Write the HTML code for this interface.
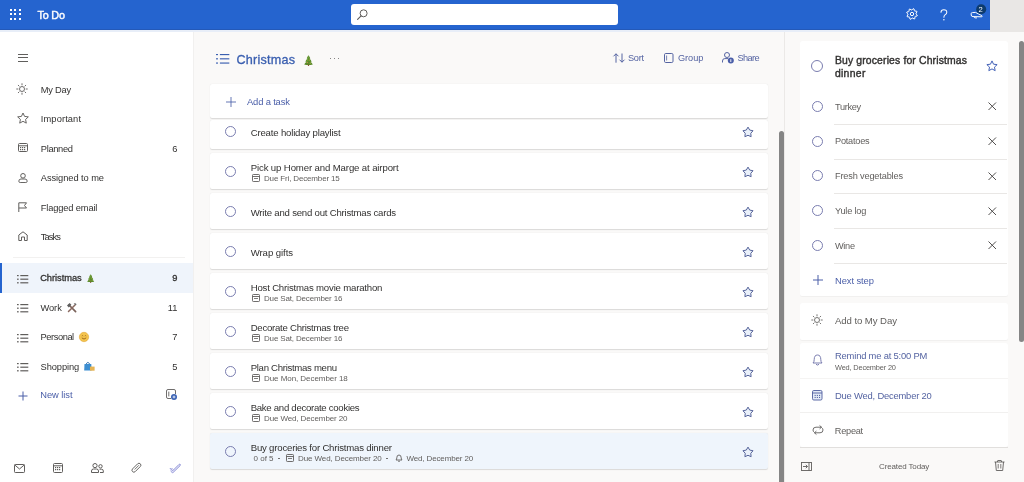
<!DOCTYPE html>
<html><head><meta charset="utf-8"><title>To Do</title>
<style>
html,body{margin:0;padding:0;width:1024px;height:482px;overflow:hidden;background:#faf9f8;font-family:"Liberation Sans", sans-serif;}
.t{position:absolute;white-space:nowrap;line-height:1;}
svg{display:block}
#app{position:absolute;left:0;top:0;width:1024px;height:482px;overflow:hidden;filter:blur(0.35px);}
</style></head><body><div id="app">
<div style="position:absolute;left:0px;top:30px;width:193px;height:452px;background:#ffffff"></div>
<div style="position:absolute;left:193px;top:30px;width:591px;height:452px;background:#faf9f8"></div>
<div style="position:absolute;left:784px;top:30px;width:240px;height:452px;background:#faf9f8"></div>
<div style="position:absolute;left:784px;top:30px;width:1px;height:452px;background:#ebe9e7"></div>
<div style="position:absolute;left:193px;top:30px;width:1px;height:452px;background:#f1f0ef"></div>
<div style="position:absolute;left:0px;top:0px;width:1024px;height:30px;background:#2564cf"></div>
<div style="position:absolute;left:0px;top:28.5px;width:1024px;height:1.5px;background:#2459b8"></div>
<div style="position:absolute;left:0px;top:30px;width:1024px;height:1.5px;background:#e8eef8"></div>
<div style="position:absolute;left:10px;top:9px;width:2px;height:2px;background:#fff"></div>
<div style="position:absolute;left:14px;top:9px;width:2px;height:2px;background:#fff"></div>
<div style="position:absolute;left:19px;top:9px;width:2px;height:2px;background:#fff"></div>
<div style="position:absolute;left:10px;top:13px;width:2px;height:2px;background:#fff"></div>
<div style="position:absolute;left:14px;top:13px;width:2px;height:2px;background:#fff"></div>
<div style="position:absolute;left:19px;top:13px;width:2px;height:2px;background:#fff"></div>
<div style="position:absolute;left:10px;top:17.5px;width:2px;height:2px;background:#fff"></div>
<div style="position:absolute;left:14px;top:17.5px;width:2px;height:2px;background:#fff"></div>
<div style="position:absolute;left:19px;top:17.5px;width:2px;height:2px;background:#fff"></div>
<div class="t" style="left:37.50px;top:10.26px;font-size:10.8px;color:#ffffff;font-weight:400;letter-spacing:-0.178px;-webkit-text-stroke:0.4px #fff;">To Do</div>
<div style="position:absolute;left:351px;top:4px;width:267px;height:21px;background:#fff;border-radius:3px"></div>
<svg style="position:absolute;left:356px;top:8px;overflow:visible" width="13" height="13" viewBox="0 0 13 13"><circle cx="7.6" cy="5.3" r="3.5" fill="none" stroke="#605e5c" stroke-width="1"/><path d="M5.1 7.8 L1.6 11.3" stroke="#605e5c" stroke-width="1.1" stroke-linecap="round"/></svg>
<svg style="position:absolute;left:906px;top:8.3px;overflow:visible" width="12" height="12" viewBox="0 0 12 12"><path d="M11.29,7.07 L10.98,8.08 L9.40,8.29 L8.89,8.91 L8.98,10.50 L8.05,11.00 L6.79,10.02 L5.99,10.10 L4.93,11.29 L3.92,10.98 L3.71,9.40 L3.09,8.89 L1.50,8.98 L1.00,8.05 L1.98,6.79 L1.90,5.99 L0.71,4.93 L1.02,3.92 L2.60,3.71 L3.11,3.09 L3.02,1.50 L3.95,1.00 L5.21,1.98 L6.01,1.90 L7.07,0.71 L8.08,1.02 L8.29,2.60 L8.91,3.11 L10.50,3.02 L11.00,3.95 L10.02,5.21 L10.10,6.01 Z" fill="none" stroke="#fff" stroke-width="1" stroke-linejoin="round"/><circle cx="6" cy="6" r="1.7" fill="none" stroke="#fff" stroke-width="1"/></svg>
<svg style="position:absolute;left:939.5px;top:8.5px;overflow:visible" width="8" height="12" viewBox="0 0 8 12"><path d="M1 3.2 Q1 0.8 3.8 0.8 Q6.8 0.8 6.8 3.3 Q6.8 4.9 5 5.9 Q3.9 6.6 3.9 8.3" fill="none" stroke="#fff" stroke-width="1.05" stroke-linecap="round"/><circle cx="3.9" cy="10.7" r="0.75" fill="#fff"/></svg>
<svg style="position:absolute;left:969.5px;top:11px;overflow:visible" width="14" height="8" viewBox="0 0 14 8"><path d="M1.2 2.6 Q1.2 1.6 2.4 1.6 L5.5 1.4 L11.8 4.6 Q12.6 5.2 11.8 5.8 L3 5.6 Q1.2 5.5 1.2 4 Z" fill="none" stroke="#fff" stroke-width="1" stroke-linejoin="round"/><path d="M4.2 5.7 L4.8 6.9 L7 6.9" fill="none" stroke="#fff" stroke-width="0.9"/></svg>
<svg style="position:absolute;left:975.8px;top:4px;overflow:visible" width="10.4" height="10.4" viewBox="0 0 10.4 10.4"><circle cx="5.2" cy="5.2" r="5" fill="#0d3b6e"/></svg>
<div class="t" style="left:978.60px;top:6.17px;font-size:7.6px;color:#ffffff;font-weight:400;">2</div>
<div style="position:absolute;left:990px;top:0px;width:34px;height:32px;background:#e9e7e5"></div>
<div style="position:absolute;left:17.5px;top:53.5px;width:10.5px;height:1px;background:#605e5c"></div>
<div style="position:absolute;left:17.5px;top:57.0px;width:10.5px;height:1px;background:#605e5c"></div>
<div style="position:absolute;left:17.5px;top:60.5px;width:10.5px;height:1px;background:#605e5c"></div>
<div class="t" style="left:40.80px;top:85.53px;font-size:9.3px;color:#323130;font-weight:400;letter-spacing:-0.224px;">My Day</div>
<div class="t" style="left:40.80px;top:115.03px;font-size:9.3px;color:#323130;font-weight:400;letter-spacing:0.114px;">Important</div>
<div class="t" style="left:40.80px;top:144.53px;font-size:9.3px;color:#323130;font-weight:400;letter-spacing:-0.339px;">Planned</div>
<div class="t" style="left:40.80px;top:174.03px;font-size:9.3px;color:#323130;font-weight:400;letter-spacing:-0.069px;">Assigned to me</div>
<div class="t" style="left:40.80px;top:203.53px;font-size:9.3px;color:#323130;font-weight:400;letter-spacing:-0.151px;">Flagged email</div>
<div class="t" style="left:40.80px;top:233.03px;font-size:9.3px;color:#323130;font-weight:400;letter-spacing:-0.893px;">Tasks</div>
<div class="t" style="right:846.70px;top:144.53px;font-size:9.3px;color:#323130;font-weight:400;">6</div>
<svg style="position:absolute;left:16.3px;top:82.9px;overflow:visible" width="12" height="12" viewBox="0 0 12 12"><circle cx="6" cy="6" r="2.5" fill="none" stroke="#605e5c" stroke-width="0.9"/><line x1="10.10" y1="6.00" x2="11.30" y2="6.00" stroke="#605e5c" stroke-width="0.9" stroke-linecap="round"/><line x1="8.90" y1="8.90" x2="9.75" y2="9.75" stroke="#605e5c" stroke-width="0.9" stroke-linecap="round"/><line x1="6.00" y1="10.10" x2="6.00" y2="11.30" stroke="#605e5c" stroke-width="0.9" stroke-linecap="round"/><line x1="3.10" y1="8.90" x2="2.25" y2="9.75" stroke="#605e5c" stroke-width="0.9" stroke-linecap="round"/><line x1="1.90" y1="6.00" x2="0.70" y2="6.00" stroke="#605e5c" stroke-width="0.9" stroke-linecap="round"/><line x1="3.10" y1="3.10" x2="2.25" y2="2.25" stroke="#605e5c" stroke-width="0.9" stroke-linecap="round"/><line x1="6.00" y1="1.90" x2="6.00" y2="0.70" stroke="#605e5c" stroke-width="0.9" stroke-linecap="round"/><line x1="8.90" y1="3.10" x2="9.75" y2="2.25" stroke="#605e5c" stroke-width="0.9" stroke-linecap="round"/></svg>
<svg style="position:absolute;left:16.5px;top:112px;overflow:visible" width="12" height="12" viewBox="0 0 12 12"><path d="M6.00,1.00 L7.59,4.42 L11.33,4.87 L8.57,7.43 L9.29,11.13 L6.00,9.30 L2.71,11.13 L3.43,7.43 L0.67,4.87 L4.41,4.42 Z" fill="none" stroke="#605e5c" stroke-width="0.95" stroke-linejoin="round"/></svg>
<svg style="position:absolute;left:17.5px;top:143px;overflow:visible" width="10" height="9" viewBox="0 0 10 9"><rect x="0.5" y="0.5" width="9" height="8" rx="1" fill="none" stroke="#605e5c"/><line x1="0.5" y1="2.8" x2="9.5" y2="2.8" stroke="#605e5c"/><rect x="2" y="4" width="1.2" height="1.2" fill="#605e5c"/><rect x="4" y="4" width="1.2" height="1.2" fill="#605e5c"/><rect x="6" y="4" width="1.2" height="1.2" fill="#605e5c"/><rect x="2" y="6" width="1.2" height="1.2" fill="#605e5c"/><rect x="4" y="6" width="1.2" height="1.2" fill="#605e5c"/><rect x="6" y="6" width="1.2" height="1.2" fill="#605e5c"/></svg>
<svg style="position:absolute;left:17.5px;top:172.5px;overflow:visible" width="10" height="10" viewBox="0 0 10 10"><circle cx="5" cy="2.8" r="2.3" fill="none" stroke="#605e5c"/><path d="M5 9.5 H2.2 Q0.8 9.5 0.8 8.2 Q0.8 6 3 6 H7 Q9.2 6 9.2 8.2 Q9.2 9.5 7.8 9.5 Z" fill="none" stroke="#605e5c" stroke-width="0.95"/></svg>
<svg style="position:absolute;left:17.5px;top:202px;overflow:visible" width="10" height="10" viewBox="0 0 10 10"><path d="M0.8 10 L0.8 0.8 L8.5 0.8 L6.5 3.5 L8.5 6 L0.8 6" fill="none" stroke="#605e5c" stroke-linejoin="round"/></svg>
<svg style="position:absolute;left:17.5px;top:231px;overflow:visible" width="10" height="10" viewBox="0 0 10 10"><path d="M0.8 9.5 L0.8 4 L5 0.8 L9.2 4 L9.2 9.5 L6.5 9.5 L6.5 6 L3.5 6 L3.5 9.5 Z" fill="none" stroke="#605e5c" stroke-linejoin="round"/></svg>
<div style="position:absolute;left:13px;top:256.5px;width:172px;height:1px;background:#f2f1f0"></div>
<div style="position:absolute;left:0px;top:263px;width:193px;height:29.5px;background:#eff4fb"></div>
<div style="position:absolute;left:0px;top:263px;width:2px;height:29.5px;background:#2564cf"></div>
<svg style="position:absolute;left:17px;top:274.7px;overflow:visible" width="12.0" height="9.0" viewBox="0 0 12.0 9.0"><rect x="0" y="0.0" width="1.7" height="1.2" fill="#605e5c"/><rect x="3.3" y="0.0" width="8.0" height="1.2" fill="#605e5c"/><rect x="0" y="3.6" width="1.7" height="1.2" fill="#605e5c"/><rect x="3.3" y="3.6" width="8.0" height="1.2" fill="#605e5c"/><rect x="0" y="7.2" width="1.7" height="1.2" fill="#605e5c"/><rect x="3.3" y="7.2" width="8.0" height="1.2" fill="#605e5c"/></svg>
<div class="t" style="left:40.20px;top:274.13px;font-size:9.3px;color:#323130;font-weight:400;letter-spacing:-0.044px;-webkit-text-stroke:0.3px #323130;">Christmas</div>
<div class="t" style="right:846.70px;top:274.13px;font-size:9.3px;color:#323130;font-weight:400;-webkit-text-stroke:0.3px #323130;">9</div>
<svg style="position:absolute;left:17px;top:304.2px;overflow:visible" width="12.0" height="9.0" viewBox="0 0 12.0 9.0"><rect x="0" y="0.0" width="1.7" height="1.2" fill="#605e5c"/><rect x="3.3" y="0.0" width="8.0" height="1.2" fill="#605e5c"/><rect x="0" y="3.6" width="1.7" height="1.2" fill="#605e5c"/><rect x="3.3" y="3.6" width="8.0" height="1.2" fill="#605e5c"/><rect x="0" y="7.2" width="1.7" height="1.2" fill="#605e5c"/><rect x="3.3" y="7.2" width="8.0" height="1.2" fill="#605e5c"/></svg>
<div class="t" style="left:40.50px;top:303.63px;font-size:9.3px;color:#323130;font-weight:400;letter-spacing:-0.077px;">Work</div>
<div class="t" style="right:846.70px;top:303.63px;font-size:9.3px;color:#323130;font-weight:400;">11</div>
<svg style="position:absolute;left:17px;top:333.7px;overflow:visible" width="12.0" height="9.0" viewBox="0 0 12.0 9.0"><rect x="0" y="0.0" width="1.7" height="1.2" fill="#605e5c"/><rect x="3.3" y="0.0" width="8.0" height="1.2" fill="#605e5c"/><rect x="0" y="3.6" width="1.7" height="1.2" fill="#605e5c"/><rect x="3.3" y="3.6" width="8.0" height="1.2" fill="#605e5c"/><rect x="0" y="7.2" width="1.7" height="1.2" fill="#605e5c"/><rect x="3.3" y="7.2" width="8.0" height="1.2" fill="#605e5c"/></svg>
<div class="t" style="left:40.50px;top:333.13px;font-size:9.3px;color:#323130;font-weight:400;letter-spacing:-0.430px;">Personal</div>
<div class="t" style="right:846.70px;top:333.13px;font-size:9.3px;color:#323130;font-weight:400;">7</div>
<svg style="position:absolute;left:17px;top:363.2px;overflow:visible" width="12.0" height="9.0" viewBox="0 0 12.0 9.0"><rect x="0" y="0.0" width="1.7" height="1.2" fill="#605e5c"/><rect x="3.3" y="0.0" width="8.0" height="1.2" fill="#605e5c"/><rect x="0" y="3.6" width="1.7" height="1.2" fill="#605e5c"/><rect x="3.3" y="3.6" width="8.0" height="1.2" fill="#605e5c"/><rect x="0" y="7.2" width="1.7" height="1.2" fill="#605e5c"/><rect x="3.3" y="7.2" width="8.0" height="1.2" fill="#605e5c"/></svg>
<div class="t" style="left:40.50px;top:362.63px;font-size:9.3px;color:#323130;font-weight:400;letter-spacing:-0.072px;">Shopping</div>
<div class="t" style="right:846.70px;top:362.63px;font-size:9.3px;color:#323130;font-weight:400;">5</div>
<svg style="position:absolute;left:87.2px;top:273.8px;overflow:visible" width="9" height="11" viewBox="0 0 9 11"><g transform="scale(0.82)"><path d="M4.5 0.2 Q5.6 1.8 6.3 3.2 Q6 3.5 5.6 3.5 Q6.9 5 7.6 6.4 Q7.2 6.7 6.7 6.7 Q8.2 8.2 8.8 9.4 Q4.5 10.4 0.2 9.4 Q0.8 8.2 2.3 6.7 Q1.8 6.7 1.4 6.4 Q2.1 5 3.4 3.5 Q3 3.5 2.7 3.2 Q3.4 1.8 4.5 0.2 Z" fill="#5a8a2a"/><path d="M4.5 1.5 Q3.5 4 2.5 8" stroke="#7fae45" stroke-width="0.8" fill="none"/><circle cx="5.2" cy="5" r="0.55" fill="#d9c94a"/><circle cx="3.6" cy="7.6" r="0.55" fill="#d98a4a"/><circle cx="6.2" cy="8.1" r="0.5" fill="#e0d060"/><rect x="3.9" y="9.6" width="1.2" height="1.3" fill="#7a4a20"/></g></svg>
<svg style="position:absolute;left:66.5px;top:302.5px;overflow:visible" width="10" height="10" viewBox="0 0 10 10"><path d="M2 2 L8.6 8.6" stroke="#7a625a" stroke-width="1.7" stroke-linecap="round"/><path d="M8 2 L1.5 8.5" stroke="#8a6a60" stroke-width="1.5" stroke-linecap="round"/><path d="M0 2.6 L2.6 0 L4.4 1.8 L1.8 4.4 Z" fill="#5e5e5e"/><path d="M6.6 0.6 Q8.8 -0.4 9.6 1.6 L8.4 2.2 L7.8 1.6 Z" fill="#6a6a6a"/></svg>
<svg style="position:absolute;left:79.2px;top:332.3px;overflow:visible" width="10" height="10" viewBox="0 0 10 10"><circle cx="5" cy="5" r="4.7" fill="#f4c44e"/><circle cx="5" cy="5" r="4.7" fill="none" stroke="#e0a73a" stroke-width="0.6"/><path d="M2.8 5.9 Q5 8.2 7.2 5.9" fill="none" stroke="#9a6418" stroke-width="0.9"/><path d="M2.8 4 Q3.5 3.2 4.2 4 M5.8 4 Q6.5 3.2 7.2 4" fill="none" stroke="#9a6418" stroke-width="0.8"/></svg>
<svg style="position:absolute;left:84px;top:361.3px;overflow:visible" width="11" height="10" viewBox="0 0 11 10"><path d="M0.5 3 L7.3 3 L7.6 9.6 L0.2 9.6 Z" fill="#3c8ed1"/><path d="M2.2 3 Q3.9 -0.2 5.6 3" fill="none" stroke="#2a6aa8" stroke-width="0.9"/><rect x="6" y="5.6" width="4.6" height="4.1" fill="#e6b454"/></svg>
<svg style="position:absolute;left:17.5px;top:390.5px;overflow:visible" width="10" height="10" viewBox="0 0 10 10"><path d="M5 0.5 V9.5 M0.5 5 H9.5" stroke="#4a5ea8" stroke-width="1"/></svg>
<div class="t" style="left:40.20px;top:390.93px;font-size:9.3px;color:#4a5ea8;font-weight:400;letter-spacing:-0.022px;">New list</div>
<svg style="position:absolute;left:166px;top:389px;overflow:visible" width="11" height="11" viewBox="0 0 11 11"><path d="M5 9.5 H2 Q0.5 9.5 0.5 8 V2 Q0.5 0.5 2 0.5 H8 Q9.5 0.5 9.5 2 V5" fill="none" stroke="#605e5c" stroke-width="0.9"/><line x1="2.8" y1="2.6" x2="2.8" y2="7.4" stroke="#605e5c" stroke-width="0.9"/><circle cx="8" cy="8" r="3" fill="#3b63b5"/><path d="M8 6.6 V9.4 M6.6 8 H9.4" stroke="#fff" stroke-width="0.8"/></svg>
<svg style="position:absolute;left:14px;top:463.5px;overflow:visible" width="11" height="9" viewBox="0 0 11 9"><rect x="0.5" y="0.5" width="10" height="8" rx="0.8" fill="none" stroke="#605e5c"/><path d="M0.8 1 L5.5 5 L10.2 1" fill="none" stroke="#605e5c"/></svg>
<svg style="position:absolute;left:53px;top:463px;overflow:visible" width="10" height="10" viewBox="0 0 10 10"><rect x="0.5" y="0.5" width="9" height="9" rx="1" fill="none" stroke="#605e5c"/><line x1="0.5" y1="2.8" x2="9.5" y2="2.8" stroke="#605e5c"/><rect x="2" y="4" width="1.2" height="1.2" fill="#605e5c"/><rect x="4" y="4" width="1.2" height="1.2" fill="#605e5c"/><rect x="6" y="4" width="1.2" height="1.2" fill="#605e5c"/><rect x="2" y="6" width="1.2" height="1.2" fill="#605e5c"/><rect x="4" y="6" width="1.2" height="1.2" fill="#605e5c"/><rect x="6" y="6" width="1.2" height="1.2" fill="#605e5c"/></svg>
<svg style="position:absolute;left:90.5px;top:463px;overflow:visible" width="13" height="10" viewBox="0 0 13 10"><circle cx="4" cy="2.6" r="2.1" fill="none" stroke="#605e5c"/><path d="M0.5 9.5 V8 Q0.5 6 2.5 6 H5.5 Q7.5 6 7.5 8 V9.5 Z" fill="none" stroke="#605e5c"/><circle cx="9.5" cy="3.3" r="1.7" fill="none" stroke="#605e5c"/><path d="M8.5 6.2 H10.5 Q12.3 6.2 12.3 8 V9.5 H9" fill="none" stroke="#605e5c"/></svg>
<svg style="position:absolute;left:130px;top:462px;overflow:visible" width="12" height="12" viewBox="0 0 12 12"><g transform="rotate(-45 6 6)"><rect x="1" y="4.2" width="11" height="3.8" rx="1.9" fill="none" stroke="#605e5c" stroke-width="0.9"/><path d="M4 6.1 H10" stroke="#605e5c" stroke-width="0.8"/></g></svg>
<svg style="position:absolute;left:168.5px;top:463px;overflow:visible" width="12" height="10" viewBox="0 0 12 10"><path d="M0.8 5 L3.6 7.8 L10 1.4 Q11 0.6 11.4 1.6 Q11.6 2.2 11 2.8 L4.2 9.4 Q3.6 10 3 9.4 L1.6 8" fill="#e3e4f7" stroke="#8a8fd6" stroke-width="0.9" stroke-linejoin="round"/><path d="M2.5 5 L4 6.5" stroke="#7b80cf" stroke-width="0.8"/></svg>
<svg style="position:absolute;left:216px;top:54.4px;overflow:visible" width="14.16" height="10.62" viewBox="0 0 14.16 10.62"><rect x="0" y="0.0" width="2.006" height="1.15" fill="#3a5fb0"/><rect x="3.8939999999999997" y="0.0" width="9.44" height="1.15" fill="#3a5fb0"/><rect x="0" y="4.248" width="2.006" height="1.15" fill="#3a5fb0"/><rect x="3.8939999999999997" y="4.248" width="9.44" height="1.15" fill="#3a5fb0"/><rect x="0" y="8.496" width="2.006" height="1.15" fill="#3a5fb0"/><rect x="3.8939999999999997" y="8.496" width="9.44" height="1.15" fill="#3a5fb0"/></svg>
<div class="t" style="left:236.50px;top:53.93px;font-size:12.6px;color:#3a5fb0;font-weight:400;letter-spacing:0.224px;-webkit-text-stroke:0.32px #3a5fb0;">Christmas</div>
<svg style="position:absolute;left:304px;top:54.6px;overflow:visible" width="9" height="11" viewBox="0 0 9 11"><g transform="scale(1.0)"><path d="M4.5 0.2 Q5.6 1.8 6.3 3.2 Q6 3.5 5.6 3.5 Q6.9 5 7.6 6.4 Q7.2 6.7 6.7 6.7 Q8.2 8.2 8.8 9.4 Q4.5 10.4 0.2 9.4 Q0.8 8.2 2.3 6.7 Q1.8 6.7 1.4 6.4 Q2.1 5 3.4 3.5 Q3 3.5 2.7 3.2 Q3.4 1.8 4.5 0.2 Z" fill="#5a8a2a"/><path d="M4.5 1.5 Q3.5 4 2.5 8" stroke="#7fae45" stroke-width="0.8" fill="none"/><circle cx="5.2" cy="5" r="0.55" fill="#d9c94a"/><circle cx="3.6" cy="7.6" r="0.55" fill="#d98a4a"/><circle cx="6.2" cy="8.1" r="0.5" fill="#e0d060"/><rect x="3.9" y="9.6" width="1.2" height="1.3" fill="#7a4a20"/></g></svg>
<div style="position:absolute;left:330px;top:57.6px;width:1.3px;height:1.3px;background:#605e5c;border-radius:50%"></div>
<div style="position:absolute;left:334px;top:57.6px;width:1.3px;height:1.3px;background:#605e5c;border-radius:50%"></div>
<div style="position:absolute;left:338px;top:57.6px;width:1.3px;height:1.3px;background:#605e5c;border-radius:50%"></div>
<svg style="position:absolute;left:612.5px;top:53px;overflow:visible" width="12" height="10" viewBox="0 0 12 10"><path d="M3 9.7 V0.8 M0.5 3.3 L3 0.8 L5.5 3.3" fill="none" stroke="#5564a2" stroke-width="1"/><path d="M9 0.5 V9.2 M6.5 6.7 L9 9.2 L11.5 6.7" fill="none" stroke="#5564a2" stroke-width="1"/></svg>
<div class="t" style="left:628.00px;top:53.61px;font-size:9.2px;color:#5564a2;font-weight:400;letter-spacing:-0.291px;">Sort</div>
<svg style="position:absolute;left:664px;top:53px;overflow:visible" width="9.5" height="10" viewBox="0 0 9.5 10"><rect x="0.5" y="0.5" width="8.5" height="9" rx="1.2" fill="none" stroke="#5564a2"/><line x1="2.6" y1="2.5" x2="2.6" y2="7.5" stroke="#5564a2" stroke-width="0.8"/></svg>
<div class="t" style="left:678.00px;top:53.61px;font-size:9.2px;color:#5564a2;font-weight:400;letter-spacing:-0.043px;">Group</div>
<svg style="position:absolute;left:722px;top:51.8px;overflow:visible" width="12" height="12" viewBox="0 0 12 12"><circle cx="5" cy="3" r="2.5" fill="none" stroke="#5564a2"/><path d="M0.5 10.5 V9 Q0.5 6.6 2.8 6.6 H6" fill="none" stroke="#5564a2"/><circle cx="8.8" cy="8.6" r="3" fill="#4a5ea8"/><path d="M8.8 7.2 V10" stroke="#fff" stroke-width="0.9"/></svg>
<div class="t" style="left:737.50px;top:53.61px;font-size:9.2px;color:#5564a2;font-weight:400;letter-spacing:-0.588px;">Share</div>
<div style="position:absolute;left:209.5px;top:83.5px;width:558.5px;height:34.8px;background:#fff;border-radius:2px;box-shadow:0 0.8px 1px rgba(0,0,0,0.13)"></div>
<svg style="position:absolute;left:225.5px;top:96.5px;overflow:visible" width="10" height="10" viewBox="0 0 10 10"><path d="M5 0 V10 M0 5 H10" stroke="#4a5ea8" stroke-width="0.85"/></svg>
<div class="t" style="left:247.00px;top:97.24px;font-size:9.4px;color:#4a5ea8;font-weight:400;letter-spacing:-0.157px;">Add a task</div>
<div style="position:absolute;left:210px;top:119.5px;width:558px;height:29.2px;background:#fff;border-radius:2px;box-shadow:0 0.8px 1px rgba(0,0,0,0.13)"></div>
<svg style="position:absolute;left:224.0px;top:125.0px;overflow:visible" width="13.0" height="13.0" viewBox="0 0 13.0 13.0"><circle cx="6.5" cy="6.5" r="5.0" fill="none" stroke="#7376ab" stroke-width="0.95"/></svg>
<div class="t" style="left:250.70px;top:127.87px;font-size:9.6px;color:#323130;font-weight:400;letter-spacing:-0.178px;">Create holiday playlist</div>
<svg style="position:absolute;left:742px;top:126.30000000000001px;overflow:visible" width="12" height="12" viewBox="0 0 12 12"><path d="M6.00,1.10 L7.70,4.05 L11.04,4.76 L8.76,7.30 L9.12,10.69 L6.00,9.30 L2.88,10.69 L3.24,7.30 L0.96,4.76 L4.30,4.05 Z" fill="#eaf1fb" stroke="#56649a" stroke-width="1.0" stroke-linejoin="round"/></svg>
<div style="position:absolute;left:210px;top:152.5px;width:558px;height:36.6px;background:#fff;border-radius:2px;box-shadow:0 0.8px 1px rgba(0,0,0,0.13)"></div>
<svg style="position:absolute;left:224.0px;top:164.7px;overflow:visible" width="13.0" height="13.0" viewBox="0 0 13.0 13.0"><circle cx="6.5" cy="6.5" r="5.0" fill="none" stroke="#7376ab" stroke-width="0.95"/></svg>
<svg style="position:absolute;left:742px;top:166.0px;overflow:visible" width="12" height="12" viewBox="0 0 12 12"><path d="M6.00,1.10 L7.70,4.05 L11.04,4.76 L8.76,7.30 L9.12,10.69 L6.00,9.30 L2.88,10.69 L3.24,7.30 L0.96,4.76 L4.30,4.05 Z" fill="#eaf1fb" stroke="#56649a" stroke-width="1.0" stroke-linejoin="round"/></svg>
<div class="t" style="left:250.70px;top:162.57px;font-size:9.6px;color:#323130;font-weight:400;letter-spacing:-0.123px;">Pick up Homer and Marge at airport</div>
<svg style="position:absolute;left:252px;top:174.3px;overflow:visible" width="8" height="8" viewBox="0 0 8 8"><rect x="0.5" y="0.5" width="7" height="7" rx="0.8" fill="none" stroke="#605e5c" stroke-width="0.9"/><line x1="0.5" y1="2.5" x2="7.5" y2="2.5" stroke="#605e5c" stroke-width="0.9"/><rect x="2" y="4" width="4" height="0.8" fill="#605e5c"/></svg>
<div class="t" style="left:264.00px;top:174.73px;font-size:8px;color:#605e5c;font-weight:400;letter-spacing:-0.153px;">Due Fri, December 15</div>
<div style="position:absolute;left:210px;top:192.5px;width:558px;height:36.6px;background:#fff;border-radius:2px;box-shadow:0 0.8px 1px rgba(0,0,0,0.13)"></div>
<svg style="position:absolute;left:224.0px;top:204.7px;overflow:visible" width="13.0" height="13.0" viewBox="0 0 13.0 13.0"><circle cx="6.5" cy="6.5" r="5.0" fill="none" stroke="#7376ab" stroke-width="0.95"/></svg>
<svg style="position:absolute;left:742px;top:206.0px;overflow:visible" width="12" height="12" viewBox="0 0 12 12"><path d="M6.00,1.10 L7.70,4.05 L11.04,4.76 L8.76,7.30 L9.12,10.69 L6.00,9.30 L2.88,10.69 L3.24,7.30 L0.96,4.76 L4.30,4.05 Z" fill="#eaf1fb" stroke="#56649a" stroke-width="1.0" stroke-linejoin="round"/></svg>
<div class="t" style="left:250.70px;top:207.67px;font-size:9.6px;color:#323130;font-weight:400;letter-spacing:-0.210px;">Write and send out Christmas cards</div>
<div style="position:absolute;left:210px;top:232.5px;width:558px;height:36.6px;background:#fff;border-radius:2px;box-shadow:0 0.8px 1px rgba(0,0,0,0.13)"></div>
<svg style="position:absolute;left:224.0px;top:244.7px;overflow:visible" width="13.0" height="13.0" viewBox="0 0 13.0 13.0"><circle cx="6.5" cy="6.5" r="5.0" fill="none" stroke="#7376ab" stroke-width="0.95"/></svg>
<svg style="position:absolute;left:742px;top:246.0px;overflow:visible" width="12" height="12" viewBox="0 0 12 12"><path d="M6.00,1.10 L7.70,4.05 L11.04,4.76 L8.76,7.30 L9.12,10.69 L6.00,9.30 L2.88,10.69 L3.24,7.30 L0.96,4.76 L4.30,4.05 Z" fill="#eaf1fb" stroke="#56649a" stroke-width="1.0" stroke-linejoin="round"/></svg>
<div class="t" style="left:250.70px;top:247.67px;font-size:9.6px;color:#323130;font-weight:400;letter-spacing:-0.071px;">Wrap gifts</div>
<div style="position:absolute;left:210px;top:272.5px;width:558px;height:36.6px;background:#fff;border-radius:2px;box-shadow:0 0.8px 1px rgba(0,0,0,0.13)"></div>
<svg style="position:absolute;left:224.0px;top:284.7px;overflow:visible" width="13.0" height="13.0" viewBox="0 0 13.0 13.0"><circle cx="6.5" cy="6.5" r="5.0" fill="none" stroke="#7376ab" stroke-width="0.95"/></svg>
<svg style="position:absolute;left:742px;top:286.0px;overflow:visible" width="12" height="12" viewBox="0 0 12 12"><path d="M6.00,1.10 L7.70,4.05 L11.04,4.76 L8.76,7.30 L9.12,10.69 L6.00,9.30 L2.88,10.69 L3.24,7.30 L0.96,4.76 L4.30,4.05 Z" fill="#eaf1fb" stroke="#56649a" stroke-width="1.0" stroke-linejoin="round"/></svg>
<div class="t" style="left:250.70px;top:282.57px;font-size:9.6px;color:#323130;font-weight:400;letter-spacing:-0.190px;">Host Christmas movie marathon</div>
<svg style="position:absolute;left:252px;top:294.3px;overflow:visible" width="8" height="8" viewBox="0 0 8 8"><rect x="0.5" y="0.5" width="7" height="7" rx="0.8" fill="none" stroke="#605e5c" stroke-width="0.9"/><line x1="0.5" y1="2.5" x2="7.5" y2="2.5" stroke="#605e5c" stroke-width="0.9"/><rect x="2" y="4" width="4" height="0.8" fill="#605e5c"/></svg>
<div class="t" style="left:264.00px;top:294.73px;font-size:8px;color:#605e5c;font-weight:400;letter-spacing:-0.157px;">Due Sat, December 16</div>
<div style="position:absolute;left:210px;top:312.5px;width:558px;height:36.6px;background:#fff;border-radius:2px;box-shadow:0 0.8px 1px rgba(0,0,0,0.13)"></div>
<svg style="position:absolute;left:224.0px;top:324.7px;overflow:visible" width="13.0" height="13.0" viewBox="0 0 13.0 13.0"><circle cx="6.5" cy="6.5" r="5.0" fill="none" stroke="#7376ab" stroke-width="0.95"/></svg>
<svg style="position:absolute;left:742px;top:326.0px;overflow:visible" width="12" height="12" viewBox="0 0 12 12"><path d="M6.00,1.10 L7.70,4.05 L11.04,4.76 L8.76,7.30 L9.12,10.69 L6.00,9.30 L2.88,10.69 L3.24,7.30 L0.96,4.76 L4.30,4.05 Z" fill="#eaf1fb" stroke="#56649a" stroke-width="1.0" stroke-linejoin="round"/></svg>
<div class="t" style="left:250.70px;top:322.57px;font-size:9.6px;color:#323130;font-weight:400;letter-spacing:-0.256px;">Decorate Christmas tree</div>
<svg style="position:absolute;left:252px;top:334.3px;overflow:visible" width="8" height="8" viewBox="0 0 8 8"><rect x="0.5" y="0.5" width="7" height="7" rx="0.8" fill="none" stroke="#605e5c" stroke-width="0.9"/><line x1="0.5" y1="2.5" x2="7.5" y2="2.5" stroke="#605e5c" stroke-width="0.9"/><rect x="2" y="4" width="4" height="0.8" fill="#605e5c"/></svg>
<div class="t" style="left:264.00px;top:334.73px;font-size:8px;color:#605e5c;font-weight:400;letter-spacing:-0.157px;">Due Sat, December 16</div>
<div style="position:absolute;left:210px;top:352.5px;width:558px;height:36.6px;background:#fff;border-radius:2px;box-shadow:0 0.8px 1px rgba(0,0,0,0.13)"></div>
<svg style="position:absolute;left:224.0px;top:364.7px;overflow:visible" width="13.0" height="13.0" viewBox="0 0 13.0 13.0"><circle cx="6.5" cy="6.5" r="5.0" fill="none" stroke="#7376ab" stroke-width="0.95"/></svg>
<svg style="position:absolute;left:742px;top:366.0px;overflow:visible" width="12" height="12" viewBox="0 0 12 12"><path d="M6.00,1.10 L7.70,4.05 L11.04,4.76 L8.76,7.30 L9.12,10.69 L6.00,9.30 L2.88,10.69 L3.24,7.30 L0.96,4.76 L4.30,4.05 Z" fill="#eaf1fb" stroke="#56649a" stroke-width="1.0" stroke-linejoin="round"/></svg>
<div class="t" style="left:250.70px;top:362.57px;font-size:9.6px;color:#323130;font-weight:400;letter-spacing:-0.298px;">Plan Christmas menu</div>
<svg style="position:absolute;left:252px;top:374.3px;overflow:visible" width="8" height="8" viewBox="0 0 8 8"><rect x="0.5" y="0.5" width="7" height="7" rx="0.8" fill="none" stroke="#605e5c" stroke-width="0.9"/><line x1="0.5" y1="2.5" x2="7.5" y2="2.5" stroke="#605e5c" stroke-width="0.9"/><rect x="2" y="4" width="4" height="0.8" fill="#605e5c"/></svg>
<div class="t" style="left:264.00px;top:374.73px;font-size:8px;color:#605e5c;font-weight:400;letter-spacing:-0.060px;">Due Mon, December 18</div>
<div style="position:absolute;left:210px;top:392.5px;width:558px;height:36.6px;background:#fff;border-radius:2px;box-shadow:0 0.8px 1px rgba(0,0,0,0.13)"></div>
<svg style="position:absolute;left:224.0px;top:404.7px;overflow:visible" width="13.0" height="13.0" viewBox="0 0 13.0 13.0"><circle cx="6.5" cy="6.5" r="5.0" fill="none" stroke="#7376ab" stroke-width="0.95"/></svg>
<svg style="position:absolute;left:742px;top:406.0px;overflow:visible" width="12" height="12" viewBox="0 0 12 12"><path d="M6.00,1.10 L7.70,4.05 L11.04,4.76 L8.76,7.30 L9.12,10.69 L6.00,9.30 L2.88,10.69 L3.24,7.30 L0.96,4.76 L4.30,4.05 Z" fill="#eaf1fb" stroke="#56649a" stroke-width="1.0" stroke-linejoin="round"/></svg>
<div class="t" style="left:250.70px;top:402.57px;font-size:9.6px;color:#323130;font-weight:400;letter-spacing:-0.284px;">Bake and decorate cookies</div>
<svg style="position:absolute;left:252px;top:414.3px;overflow:visible" width="8" height="8" viewBox="0 0 8 8"><rect x="0.5" y="0.5" width="7" height="7" rx="0.8" fill="none" stroke="#605e5c" stroke-width="0.9"/><line x1="0.5" y1="2.5" x2="7.5" y2="2.5" stroke="#605e5c" stroke-width="0.9"/><rect x="2" y="4" width="4" height="0.8" fill="#605e5c"/></svg>
<div class="t" style="left:264.00px;top:414.73px;font-size:8px;color:#605e5c;font-weight:400;letter-spacing:-0.114px;">Due Wed, December 20</div>
<div style="position:absolute;left:210px;top:432.5px;width:558px;height:36.6px;background:#eff5fc;border-radius:2px;box-shadow:0 0.8px 1px rgba(0,0,0,0.13)"></div>
<svg style="position:absolute;left:224.0px;top:444.7px;overflow:visible" width="13.0" height="13.0" viewBox="0 0 13.0 13.0"><circle cx="6.5" cy="6.5" r="5.0" fill="none" stroke="#7376ab" stroke-width="0.95"/></svg>
<svg style="position:absolute;left:742px;top:446.0px;overflow:visible" width="12" height="12" viewBox="0 0 12 12"><path d="M6.00,1.10 L7.70,4.05 L11.04,4.76 L8.76,7.30 L9.12,10.69 L6.00,9.30 L2.88,10.69 L3.24,7.30 L0.96,4.76 L4.30,4.05 Z" fill="#eaf1fb" stroke="#56649a" stroke-width="1.0" stroke-linejoin="round"/></svg>
<div class="t" style="left:250.70px;top:442.57px;font-size:9.6px;color:#323130;font-weight:400;letter-spacing:-0.194px;">Buy groceries for Christmas dinner</div>
<div class="t" style="left:253.60px;top:454.73px;font-size:8px;color:#605e5c;font-weight:400;letter-spacing:-0.023px;">0 of 5</div>
<div style="position:absolute;left:278.3px;top:457.5px;width:1.8px;height:1.8px;background:#605e5c;border-radius:50%"></div>
<svg style="position:absolute;left:286px;top:454.3px;overflow:visible" width="8" height="8" viewBox="0 0 8 8"><rect x="0.5" y="0.5" width="7" height="7" rx="0.8" fill="none" stroke="#605e5c" stroke-width="0.9"/><line x1="0.5" y1="2.5" x2="7.5" y2="2.5" stroke="#605e5c" stroke-width="0.9"/><rect x="2" y="4" width="4" height="0.8" fill="#605e5c"/></svg>
<div class="t" style="left:298.00px;top:454.73px;font-size:8px;color:#605e5c;font-weight:400;letter-spacing:-0.099px;">Due Wed, December 20</div>
<div style="position:absolute;left:386.3px;top:457.5px;width:1.8px;height:1.8px;background:#605e5c;border-radius:50%"></div>
<svg style="position:absolute;left:394.5px;top:454.0px;overflow:visible" width="8" height="8" viewBox="0 0 8 8"><path d="M1 6 Q1.8 5.2 1.8 3.8 Q1.8 1 4 1 Q6.2 1 6.2 3.8 Q6.2 5.2 7 6 Z" fill="none" stroke="#605e5c" stroke-width="0.9" stroke-linejoin="round"/><path d="M3 7 Q4 8 5 7" fill="none" stroke="#605e5c" stroke-width="0.8"/></svg>
<div class="t" style="left:406.40px;top:454.73px;font-size:8px;color:#605e5c;font-weight:400;letter-spacing:-0.132px;">Wed, December 20</div>
<div style="position:absolute;left:779px;top:131px;width:5px;height:351px;background:#858585;border-radius:2.5px 2.5px 0 0"></div>
<div style="position:absolute;left:800px;top:41px;width:208px;height:254.5px;background:#fff;border-radius:2px;box-shadow:0 0.5px 0.8px rgba(0,0,0,0.04)"></div>
<svg style="position:absolute;left:810.4px;top:58.5px;overflow:visible" width="14" height="14" viewBox="0 0 14 14"><circle cx="7" cy="7" r="5.5" fill="none" stroke="#7376ab" stroke-width="0.95"/></svg>
<div class="t" style="left:834.90px;top:55.70px;font-size:10.4px;color:#323130;font-weight:400;letter-spacing:0.150px;-webkit-text-stroke:0.4px #323130;">Buy groceries for Christmas</div>
<div class="t" style="left:834.90px;top:68.60px;font-size:10.4px;color:#323130;font-weight:400;letter-spacing:0.318px;-webkit-text-stroke:0.4px #323130;">dinner</div>
<svg style="position:absolute;left:985.8px;top:60px;overflow:visible" width="12" height="12" viewBox="0 0 12 12"><path d="M6.00,0.90 L7.53,4.20 L11.14,4.63 L8.47,7.10 L9.17,10.67 L6.00,8.90 L2.83,10.67 L3.53,7.10 L0.86,4.63 L4.47,4.20 Z" fill="none" stroke="#4563b8" stroke-width="1" stroke-linejoin="round"/></svg>
<svg style="position:absolute;left:810.9px;top:100.0px;overflow:visible" width="13.0" height="13.0" viewBox="0 0 13.0 13.0"><circle cx="6.5" cy="6.5" r="5.0" fill="none" stroke="#7376ab" stroke-width="0.95"/></svg>
<div class="t" style="left:835.00px;top:102.71px;font-size:9.2px;color:#605e5c;font-weight:400;letter-spacing:-0.315px;">Turkey</div>
<svg style="position:absolute;left:987.7px;top:102.4px;overflow:visible" width="9" height="9" viewBox="0 0 9 9"><path d="M0.5 0.5 L8 8 M8 0.5 L0.5 8" stroke="#484644" stroke-width="0.95"/></svg>
<div style="position:absolute;left:834px;top:123.8px;width:173px;height:1px;background:#e9e7e5"></div>
<svg style="position:absolute;left:810.9px;top:134.7px;overflow:visible" width="13.0" height="13.0" viewBox="0 0 13.0 13.0"><circle cx="6.5" cy="6.5" r="5.0" fill="none" stroke="#7376ab" stroke-width="0.95"/></svg>
<div class="t" style="left:835.00px;top:137.41px;font-size:9.2px;color:#605e5c;font-weight:400;letter-spacing:-0.226px;">Potatoes</div>
<svg style="position:absolute;left:987.7px;top:137.1px;overflow:visible" width="9" height="9" viewBox="0 0 9 9"><path d="M0.5 0.5 L8 8 M8 0.5 L0.5 8" stroke="#484644" stroke-width="0.95"/></svg>
<div style="position:absolute;left:834px;top:158.5px;width:173px;height:1px;background:#e9e7e5"></div>
<svg style="position:absolute;left:810.9px;top:169.4px;overflow:visible" width="13.0" height="13.0" viewBox="0 0 13.0 13.0"><circle cx="6.5" cy="6.5" r="5.0" fill="none" stroke="#7376ab" stroke-width="0.95"/></svg>
<div class="t" style="left:835.00px;top:172.11px;font-size:9.2px;color:#605e5c;font-weight:400;letter-spacing:-0.165px;">Fresh vegetables</div>
<svg style="position:absolute;left:987.7px;top:171.8px;overflow:visible" width="9" height="9" viewBox="0 0 9 9"><path d="M0.5 0.5 L8 8 M8 0.5 L0.5 8" stroke="#484644" stroke-width="0.95"/></svg>
<div style="position:absolute;left:834px;top:193.20000000000002px;width:173px;height:1px;background:#e9e7e5"></div>
<svg style="position:absolute;left:810.9px;top:204.10000000000002px;overflow:visible" width="13.0" height="13.0" viewBox="0 0 13.0 13.0"><circle cx="6.5" cy="6.5" r="5.0" fill="none" stroke="#7376ab" stroke-width="0.95"/></svg>
<div class="t" style="left:835.00px;top:206.81px;font-size:9.2px;color:#605e5c;font-weight:400;letter-spacing:-0.203px;">Yule log</div>
<svg style="position:absolute;left:987.7px;top:206.50000000000003px;overflow:visible" width="9" height="9" viewBox="0 0 9 9"><path d="M0.5 0.5 L8 8 M8 0.5 L0.5 8" stroke="#484644" stroke-width="0.95"/></svg>
<div style="position:absolute;left:834px;top:227.90000000000003px;width:173px;height:1px;background:#e9e7e5"></div>
<svg style="position:absolute;left:810.9px;top:238.8px;overflow:visible" width="13.0" height="13.0" viewBox="0 0 13.0 13.0"><circle cx="6.5" cy="6.5" r="5.0" fill="none" stroke="#7376ab" stroke-width="0.95"/></svg>
<div class="t" style="left:835.00px;top:241.51px;font-size:9.2px;color:#605e5c;font-weight:400;letter-spacing:-0.304px;">Wine</div>
<svg style="position:absolute;left:987.7px;top:241.20000000000002px;overflow:visible" width="9" height="9" viewBox="0 0 9 9"><path d="M0.5 0.5 L8 8 M8 0.5 L0.5 8" stroke="#484644" stroke-width="0.95"/></svg>
<div style="position:absolute;left:834px;top:262.6px;width:173px;height:1px;background:#e9e7e5"></div>
<svg style="position:absolute;left:812.5px;top:274.5px;overflow:visible" width="10" height="10" viewBox="0 0 10 10"><path d="M5 0 V10 M0 5 H10" stroke="#4a5ea8" stroke-width="1"/></svg>
<div class="t" style="left:835.00px;top:275.94px;font-size:9.4px;color:#4a5ea8;font-weight:400;letter-spacing:-0.088px;">Next step</div>
<div style="position:absolute;left:800px;top:302.5px;width:208px;height:37.5px;background:#fff;border-radius:2px;box-shadow:0 0.5px 0.8px rgba(0,0,0,0.04)"></div>
<svg style="position:absolute;left:811.2px;top:314.4px;overflow:visible" width="12" height="12" viewBox="0 0 12 12"><circle cx="6" cy="6" r="2.5" fill="none" stroke="#605e5c" stroke-width="0.85"/><line x1="10.10" y1="6.00" x2="11.30" y2="6.00" stroke="#605e5c" stroke-width="0.85" stroke-linecap="round"/><line x1="8.90" y1="8.90" x2="9.75" y2="9.75" stroke="#605e5c" stroke-width="0.85" stroke-linecap="round"/><line x1="6.00" y1="10.10" x2="6.00" y2="11.30" stroke="#605e5c" stroke-width="0.85" stroke-linecap="round"/><line x1="3.10" y1="8.90" x2="2.25" y2="9.75" stroke="#605e5c" stroke-width="0.85" stroke-linecap="round"/><line x1="1.90" y1="6.00" x2="0.70" y2="6.00" stroke="#605e5c" stroke-width="0.85" stroke-linecap="round"/><line x1="3.10" y1="3.10" x2="2.25" y2="2.25" stroke="#605e5c" stroke-width="0.85" stroke-linecap="round"/><line x1="6.00" y1="1.90" x2="6.00" y2="0.70" stroke="#605e5c" stroke-width="0.85" stroke-linecap="round"/><line x1="8.90" y1="3.10" x2="9.75" y2="2.25" stroke="#605e5c" stroke-width="0.85" stroke-linecap="round"/></svg>
<div class="t" style="left:835.00px;top:316.07px;font-size:9.6px;color:#605e5c;font-weight:400;letter-spacing:-0.080px;">Add to My Day</div>
<div style="position:absolute;left:800px;top:342.5px;width:208px;height:104.5px;background:#fff;border-radius:2px;box-shadow:0 0.5px 0.8px rgba(0,0,0,0.04)"></div>
<svg style="position:absolute;left:812px;top:354.2px;overflow:visible" width="11" height="12.5" viewBox="0 0 11 12.5"><path d="M1 9 Q2.2 8 2.2 5.6 Q2.2 1 5.5 1 Q8.8 1 8.8 5.6 Q8.8 8 10 9 Z" fill="none" stroke="#7376ab" stroke-width="0.95" stroke-linejoin="round"/><path d="M4 10.3 Q5.5 11.8 7 10.3" fill="none" stroke="#7376ab" stroke-width="0.95"/></svg>
<div class="t" style="left:835.00px;top:350.84px;font-size:9.4px;color:#5564a2;font-weight:400;letter-spacing:-0.186px;">Remind me at 5:00 PM</div>
<div class="t" style="left:835.00px;top:364.34px;font-size:7.4px;color:#605e5c;font-weight:400;letter-spacing:-0.174px;">Wed, December 20</div>
<div style="position:absolute;left:800px;top:377.5px;width:208px;height:1px;background:#f5f4f3"></div>
<svg style="position:absolute;left:812.3px;top:390.3px;overflow:visible" width="10.5" height="10.5" viewBox="0 0 10.5 10.5"><rect x="0.5" y="0.5" width="9.5" height="9.5" rx="1.3" fill="#e4ebf7" stroke="#5564a2" stroke-width="0.95"/><line x1="0.5" y1="3" x2="10" y2="3" stroke="#5564a2" stroke-width="0.95"/><rect x="2.6" y="4.9" width="1.1" height="1.1" fill="#5564a2"/><rect x="4.800000000000001" y="4.9" width="1.1" height="1.1" fill="#5564a2"/><rect x="7.0" y="4.9" width="1.1" height="1.1" fill="#5564a2"/><rect x="2.6" y="6.9" width="1.1" height="1.1" fill="#5564a2"/><rect x="4.800000000000001" y="6.9" width="1.1" height="1.1" fill="#5564a2"/><rect x="7.0" y="6.9" width="1.1" height="1.1" fill="#5564a2"/></svg>
<div class="t" style="left:835.00px;top:390.94px;font-size:9.4px;color:#5564a2;font-weight:400;letter-spacing:-0.193px;">Due Wed, December 20</div>
<div style="position:absolute;left:800px;top:412px;width:208px;height:1px;background:#f1f0ef"></div>
<svg style="position:absolute;left:811.5px;top:425px;overflow:visible" width="12" height="10" viewBox="0 0 12 10"><path d="M2.5 7.5 Q1 6.5 1 5 Q1 2.2 4 2.2 H9.5 M7.6 0.5 L9.5 2.2 L7.6 3.9" fill="none" stroke="#605e5c" stroke-width="0.9" stroke-linejoin="round"/><path d="M9.5 2.5 Q11 3.5 11 5 Q11 7.8 8 7.8 H2.5 M4.4 6.1 L2.5 7.8 L4.4 9.5" fill="none" stroke="#605e5c" stroke-width="0.9" stroke-linejoin="round"/></svg>
<div class="t" style="left:834.80px;top:426.81px;font-size:9.2px;color:#605e5c;font-weight:400;letter-spacing:-0.253px;">Repeat</div>
<div style="position:absolute;left:800px;top:447px;width:208px;height:1px;background:#e1dfdd"></div>
<svg style="position:absolute;left:801px;top:461.5px;overflow:visible" width="11" height="9" viewBox="0 0 11 9"><rect x="0.5" y="0.5" width="10" height="8" fill="none" stroke="#605e5c" stroke-width="0.9"/><path d="M2 4.5 H6.5 M4.8 2.8 L6.5 4.5 L4.8 6.2" fill="none" stroke="#605e5c" stroke-width="0.9"/><line x1="8" y1="0.5" x2="8" y2="8.5" stroke="#605e5c" stroke-width="0.9"/></svg>
<div class="t" style="left:879.00px;top:463.13px;font-size:8px;color:#605e5c;font-weight:400;letter-spacing:-0.132px;">Created Today</div>
<svg style="position:absolute;left:993.5px;top:460px;overflow:visible" width="11" height="11" viewBox="0 0 11 11"><path d="M0.5 2 H10.5 M3.5 2 V1 Q3.5 0.5 4 0.5 H7 Q7.5 0.5 7.5 1 V2 M1.5 2 L2.3 10.5 H8.7 L9.5 2" fill="none" stroke="#605e5c" stroke-width="0.9"/><path d="M4.2 4 V8.5 M6.8 4 V8.5" stroke="#605e5c" stroke-width="0.8"/></svg>
<div style="position:absolute;left:1019px;top:41px;width:5px;height:301px;background:#858585;border-radius:2.5px"></div>
</div></body></html>
